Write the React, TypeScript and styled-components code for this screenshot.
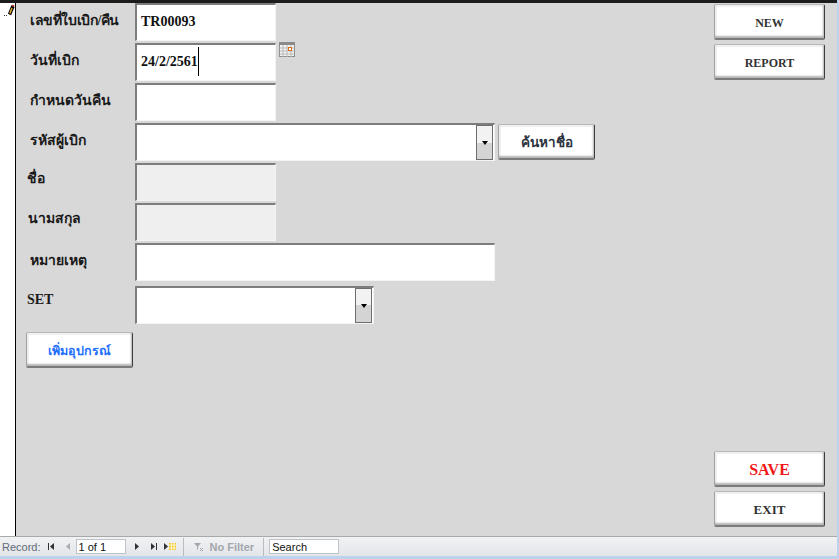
import React from 'react';
import styled, { createGlobalStyle } from 'styled-components';

const Global = createGlobalStyle`
  html, body { margin: 0; padding: 0; background: #d8d8d8; }
  #root { width: 839px; height: 559px; overflow: hidden; }
`;

const Page = styled.div`
  width: 839px;
  height: 559px;
  display: flex;
  flex-direction: column;
  background: #d8d8d8;
  border-right: 2px solid #bcd3ee;
  box-sizing: border-box;
  font-family: "Liberation Serif", "Noto Sans", serif;
`;
const TopLine = styled.div`
  height: 3px;
  flex: none;
  background: #1c1c1c;
`;
const Main = styled.div`
  flex: 1;
  display: flex;
  min-height: 0;
`;
const Selector = styled.div`
  width: 15px;
  flex: none;
  background: #fff;
  border-right: 1px solid #000;
  display: flex;
  justify-content: flex-end;
  align-items: flex-start;
  padding-top: 1px;
  box-sizing: content-box;
`;
const Form = styled.div`
  flex: 1;
  display: flex;
  justify-content: space-between;
  min-width: 0;
  padding: 0 12px 0 0;
`;
const Fields = styled.div`
  display: flex;
  flex-direction: column;
  width: 580px;
`;
const Row = styled.div<{ $mt?: number }>`
  display: flex;
  height: 40px;
  flex: none;
  margin-top: ${p => p.$mt ?? 0}px;
`;
const Label = styled.div<{ $x?: number; $y?: number; $tight?: boolean }>`
  width: ${p => 119 - (p.$x ?? 14)}px;
  margin-left: ${p => p.$x ?? 14}px;
  padding-top: ${p => p.$y ?? 8}px;
  font-size: 14px;
  font-weight: 700;
  color: #1a1a1a;
  line-height: 20px;
  letter-spacing: ${p => (p.$tight ? '-0.4px' : '0')};
  white-space: nowrap;
  box-sizing: border-box;
`;
const Box = styled.div<{ $w?: number; $off?: boolean }>`
  width: ${p => p.$w ?? 141}px;
  height: 38px;
  box-sizing: border-box;
  background: ${p => (p.$off ? '#efefef' : '#fff')};
  border-top: 2px solid #7d7d7d;
  border-left: 2px solid #7d7d7d;
  border-right: 1px solid #f4f4f4;
  border-bottom: 1px solid #f4f4f4;
  font-size: 14px;
  font-weight: 700;
  color: #111;
  display: flex;
  align-items: center;
  padding-left: 4px;
  padding-bottom: 2px;
  position: relative;
`;
const Value = styled.span<{ $caret?: boolean }>`
  line-height: 29px;
  border-right: ${p => (p.$caret ? '1px solid #000' : 'none')};
`;
const DropBtn = styled.div`
  position: absolute;
  right: 1px;
  top: 0;
  bottom: 0;
  width: 17px;
  box-sizing: border-box;
  border: 1px solid #6e6e6e;
  background: linear-gradient(#f2f2f2 0 50%, #d4d4d4 50% 100%);
  display: flex;
  align-items: center;
  justify-content: center;
`;
const Arrow = styled.i`
  width: 0;
  height: 0;
  border-left: 3.5px solid transparent;
  border-right: 3.5px solid transparent;
  border-top: 4px solid #000;
`;
const CalIcon = styled.svg`
  margin: -1px 0 0 3px;
  flex: none;
`;
const Btn = styled.button<{ $w: number; $h?: number; $color?: string; $size?: number; $mt?: number; $ml?: number; $pt?: number }>`
  width: ${p => p.$w}px;
  height: ${p => p.$h ?? 36}px;
  margin-top: ${p => p.$mt ?? 0}px;
  margin-left: ${p => p.$ml ?? 0}px;
  padding: ${p => p.$pt ?? 3}px 0 0;
  flex: none;
  border: none;
  border-top: 1px solid #b8b8b8;
  border-left: 1px solid #a0a0a0;
  border-right: 1px solid #3c3c3c;
  border-bottom: 2px solid #7c7c7c;
  border-radius: 2px;
  box-sizing: border-box;
  background: #fff;
  box-shadow: inset -2px -3px 2px -1px #b4b4b4, inset 2px 2px 1px #efefef;
  color: ${p => p.$color ?? '#333'};
  font-family: inherit;
  font-weight: 700;
  font-size: ${p => p.$size ?? 12}px;
`;
const Side = styled.div`
  width: 111px;
  display: flex;
  flex-direction: column;
  flex: none;
`;
const Spacer = styled.div`
  flex: 1;
`;
const SideEnd = styled.div`
  height: 9px;
  flex: none;
`;
const Status = styled.div`
  height: 19px;
  flex: none;
  display: flex;
  align-items: center;
  background: linear-gradient(#f1f2f4, #e3e5e9);
  border-top: 1px solid #a9a9a9;
  font-family: "Liberation Sans", sans-serif;
  font-size: 11px;
  color: #5f6b78;
  padding-left: 2px;
`;
const Bottom = styled.div`
  height: 3px;
  flex: none;
  background: #bcd3ee;
`;
const NavIcon = styled.svg<{ $gap: number }>`
  flex: none;
  margin-left: ${p => p.$gap}px;
`;
const RecInput = styled.div<{ $w: number; $ml: number }>`
  width: ${p => p.$w}px;
  height: 15px;
  line-height: 14px;
  margin-left: ${p => p.$ml}px;
  box-sizing: border-box;
  background: #fff;
  border: 1px solid #c0c4ca;
  color: #111;
  padding-left: 2px;
  flex: none;
`;
const Sep = styled.div<{ $ml?: number }>`
  width: 1px;
  height: 18px;
  background: #b9bdc3;
  flex: none;
  margin-left: ${p => p.$ml ?? 0}px;
`;
const FilterIcon = styled.svg`
  flex: none;
  margin-left: 9px;
`;
const Muted = styled.span`
  color: #a3a7ad;
  font-weight: 700;
  margin: 0 9px 0 5px;
`;

const Nav = ({ kind, dim, gap }: { kind: 'first' | 'prev' | 'next' | 'last' | 'new'; dim?: boolean; gap: number }) => {
  const c = dim ? '#a8adb3' : '#333';
  return (
    <NavIcon $gap={gap} width={kind === 'new' ? 14 : 8} height="9" viewBox={kind === 'new' ? '0 0 14 9' : '0 0 8 9'}>
      {kind === 'first' && <><rect x="1" y="1" width="1" height="7" fill={c} /><path d="M7 1v7L3 4.5z" fill={c} /></>}
      {kind === 'prev' && <path d="M6 1v7L2 4.5z" fill={c} />}
      {kind === 'next' && <path d="M2 1v7l4-3.5z" fill={c} />}
      {kind === 'last' && <><path d="M1 1v7l4-3.5z" fill={c} /><rect x="6" y="1" width="1" height="7" fill={c} /></>}
      {kind === 'new' && <><path d="M1 1v7l4-3.5z" fill={c} /><rect x="6" y="1" width="7" height="7" fill="#f0c93a" /><path d="M6 3h7M6 6h7M8.500 1v7M11 1v7" stroke="#fff6c8" strokeWidth="1" /></>}
    </NavIcon>
  );
};

export default function App() {
  return (
    <Page>
      <Global />
      <TopLine />
      <Main>
        <Selector>
          <svg width="11" height="14" viewBox="0 0 11 14">
            <path d="M5.500 10.500 L9 2" stroke="#000" strokeWidth="3.500" />
            <path d="M5.800 9.500 L8 4" stroke="#e8b030" strokeWidth="1.500" />
            <path d="M8.700 2.500 L9.500 1" stroke="#c03020" strokeWidth="2" />
            <path d="M0 11.500h1M2 11.500h1" stroke="#333" strokeWidth="1" />
          </svg>
        </Selector>
        <Form>
          <Fields>
            <Row>
              <Label $tight>เลขที่ใบเบิก/คืน</Label>
              <Box><Value>TR00093</Value></Box>
            </Row>
            <Row>
              <Label>วันที่เบิก</Label>
              <Box><Value $caret>24/2/2561</Value></Box>
              <CalIcon width="16" height="15" viewBox="0 0 16 15">
                <rect x="0.500" y="0.500" width="15" height="14" fill="#f4f4f4" stroke="#8a8a8a" />
                <rect x="0" y="0" width="16" height="3" fill="#8a8a8a" />
                <path d="M0.500 6h15M0.500 9h15M0.500 12h15M4 3v12M8 3v12M12 3v12" stroke="#b8b8b8" />
                <rect x="9.500" y="5.500" width="3" height="3" fill="#fff" stroke="#d9701a" />
              </CalIcon>
            </Row>
            <Row>
              <Label>กำหนดวันคืน</Label>
              <Box />
            </Row>
            <Row>
              <Label>รหัสผู้เบิก</Label>
              <Box $w={360}>
                <DropBtn><Arrow /></DropBtn>
              </Box>
              <Btn $w={97} $h={36} $size={13.5} $ml={3} $mt={1} $pt={1} $color="#2b3440">ค้นหาชื่อ</Btn>
            </Row>
            <Row>
              <Label $x={11} $y={6}>ชื่อ</Label>
              <Box $off />
            </Row>
            <Row>
              <Label $x={12} $y={6}>นามสกุล</Label>
              <Box $off />
            </Row>
            <Row>
              <Label $y={8}>หมายเหตุ</Label>
              <Box $w={360} />
            </Row>
            <Row $mt={3}>
              <Label $x={11} $y={4}>SET</Label>
              <Box $w={239}>
                <DropBtn><Arrow /></DropBtn>
              </Box>
            </Row>
            <Btn $w={107} $h={36} $size={12.5} $ml={10} $mt={6} $color="#1f6fff">เพิ่มอุปกรณ์</Btn>
          </Fields>
          <Side>
            <Btn $w={111} $mt={1}>NEW</Btn>
            <Btn $w={111} $mt={4}>REPORT</Btn>
            <Spacer />
            <Btn $w={111} $h={36} $size={16} $color="#f01818">SAVE</Btn>
            <Btn $w={111} $h={36} $size={13} $mt={4}>EXIT</Btn>
            <SideEnd />
          </Side>
        </Form>
      </Main>
      <Status>
        Record:
        <Nav kind="first" gap={6} />
        <Nav kind="prev" dim gap={9} />
        <RecInput $w={50} $ml={4}>1 of 1</RecInput>
        <Nav kind="next" gap={7} />
        <Nav kind="last" gap={9} />
        <Nav kind="new" gap={5} />
        <Sep $ml={6} />
        <FilterIcon width="12" height="10" viewBox="0 0 12 10">
          <path d="M1 1h7L5 4.500V8L4 7V4.500z" fill="#a3a7ad" />
          <path d="M7 6l3 3M10 6l-3 3" stroke="#a3a7ad" />
        </FilterIcon>
        <Muted>No Filter</Muted>
        <Sep />
        <RecInput $w={70} $ml={5}>Search</RecInput>
      </Status>
      <Bottom />
    </Page>
  );
}
